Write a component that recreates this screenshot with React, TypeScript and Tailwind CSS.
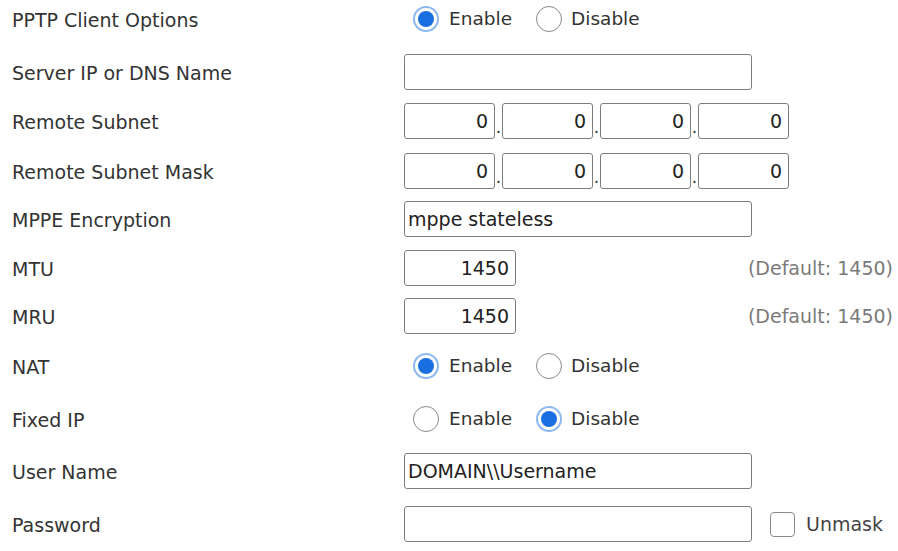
const font = "font-['DejaVu_Sans',sans-serif]";

const Radio = ({ checked }: { checked?: boolean }) =>
  checked ? (
    <span className="flex h-[26px] w-[26px] shrink-0 items-center justify-center rounded-full border-[2px] border-[#8bb8ee] bg-white">
      <span className="h-[16px] w-[16px] rounded-full bg-[#1a6fe0]" />
    </span>
  ) : (
    <span className="block h-[26px] w-[26px] shrink-0 rounded-full border-[1.5px] border-[#8a8a8a] bg-white" />
  );

const RadioPair = ({ enabled }: { enabled: boolean }) => (
  <div className="ml-[9px] flex items-center text-[18.5px] text-[#333]">
    <Radio checked={enabled} />
    <span className="ml-[10px]">Enable</span>
    <span className="ml-[24px] flex">
      <Radio checked={!enabled} />
    </span>
    <span className="ml-[9px]">Disable</span>
  </div>
);

const TextBox = ({ value = "", w = "w-[348px]", right = false }: { value?: string; w?: string; right?: boolean }) => (
  <div
    className={`flex h-[36px] shrink-0 ${w} items-center rounded-[3px] border-[1.5px] border-[#7d7d7d] bg-white px-[3px] text-[19px] text-[#222] ${
      right ? "justify-end pr-[6px]" : ""
    }`}
  >
    {value}
  </div>
);

const IpBoxes = () => (
  <div className="flex items-end">
    {[0, 1, 2, 3].map((i) => (
      <div key={i} className="flex items-end">
        {i > 0 && <span className="w-[7px] pb-[3px] text-center text-[17px] leading-none text-[#333]">.</span>}
        <TextBox value="0" w="w-[91px]" right />
      </div>
    ))}
  </div>
);

const Row = ({ label, mt, children }: { label: string; mt: string; children: React.ReactNode }) => (
  <div className={`flex h-[36px] items-center ${mt}`}>
    <div className="w-[392px] pt-[3px] text-[19px] text-[#333]">{label}</div>
    <div className="flex flex-1 items-center">{children}</div>
  </div>
);

export default function App() {
  return (
    <div className={`h-[551px] w-[898px] overflow-hidden bg-white pl-[12px] pt-[1px] ${font}`}>
      <Row label="PPTP Client Options" mt="mt-0">
        <RadioPair enabled />
      </Row>
      <Row label="Server IP or DNS Name" mt="mt-[17px]">
        <TextBox />
      </Row>
      <Row label="Remote Subnet" mt="mt-[13px]">
        <IpBoxes />
      </Row>
      <Row label="Remote Subnet Mask" mt="mt-[14px]">
        <IpBoxes />
      </Row>
      <Row label="MPPE Encryption" mt="mt-[12px]">
        <TextBox value="mppe stateless" />
      </Row>
      <Row label="MTU" mt="mt-[13px]">
        <TextBox value="1450" w="w-[112px]" right />
        <span className="ml-auto pr-[5px] text-[19px] text-[#7a7a7a]">(Default: 1450)</span>
      </Row>
      <Row label="MRU" mt="mt-[12px]">
        <TextBox value="1450" w="w-[112px]" right />
        <span className="ml-auto pr-[5px] text-[19px] text-[#7a7a7a]">(Default: 1450)</span>
      </Row>
      <Row label="NAT" mt="mt-[14px]">
        <RadioPair enabled />
      </Row>
      <Row label="Fixed IP" mt="mt-[17px]">
        <RadioPair enabled={false} />
      </Row>
      <Row label="User Name" mt="mt-[16px]">
        <TextBox value="DOMAIN\\Username" />
      </Row>
      <Row label="Password" mt="mt-[17px]">
        <TextBox />
        <span className="ml-[18px] block h-[25px] w-[25px] shrink-0 rounded-[4px] border-[1.5px] border-[#8a8a8a] bg-white" />
        <span className="ml-[11px] text-[19px] text-[#444]">Unmask</span>
      </Row>
    </div>
  );
}
